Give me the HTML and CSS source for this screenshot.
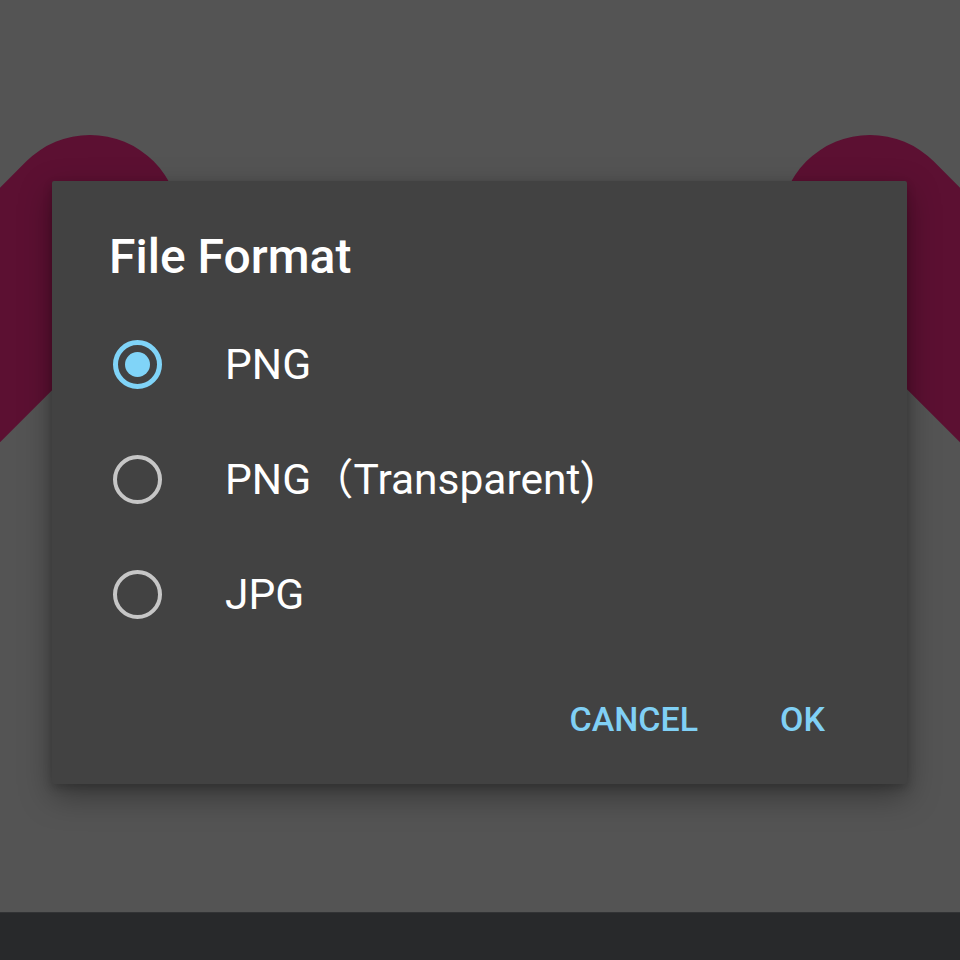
FILE: index.html
```html
<!DOCTYPE html>
<html lang="en">
<head>
<meta charset="utf-8">
<title>File Format</title>
<link rel="stylesheet" href="styles.css">
</head>
<body>
<div class="stage">
  <svg class="backdrop" width="960" height="912" viewBox="0 0 960 912" aria-hidden="true">
    <line x1="90" y1="225" x2="-300" y2="615" class="arm"/>
    <line x1="870" y1="225" x2="1260" y2="615" class="arm"/>
  </svg>
  <div class="dialog">
    <h1 class="title">File Format</h1>
    <ul class="options">
      <li class="option">
        <span class="radio checked"><span class="dot"></span></span>
        <span class="label">PNG</span>
      </li>
      <li class="option">
        <span class="radio"></span>
        <span class="label">PNG（Transparent)</span>
      </li>
      <li class="option">
        <span class="radio"></span>
        <span class="label">JPG</span>
      </li>
    </ul>
    <div class="actions">
      <span class="btn">CANCEL</span>
      <span class="btn">OK</span>
    </div>
  </div>
</div>
<div class="navbar"></div>
</body>
</html>
```
FILE: styles.css
```css
html, body {
  margin: 0;
  padding: 0;
}
body {
  width: 960px;
  height: 960px;
  background: #545454;
  font-family: Roboto, "Noto Sans", "Noto Sans CJK SC", sans-serif;
  overflow: hidden;
}
.stage {
  position: relative;
  height: 912px;
  padding: 181px 0 0 52px;
  box-sizing: border-box;
}
.backdrop {
  position: absolute;
  left: 0;
  top: 0;
}
.arm {
  stroke: #5c1032;
  stroke-width: 180;
  stroke-linecap: round;
}
.dialog {
  position: relative;
  width: 855px;
  height: 603px;
  box-sizing: border-box;
  background: #424242;
  border-radius: 2px;
  box-shadow: 0 12px 32px rgba(0, 0, 0, 0.35), 0 4px 10px rgba(0, 0, 0, 0.2);
  padding-top: 48px;
  display: flex;
  flex-direction: column;
}
.title {
  margin: 0 0 22px 0;
  padding-left: 57px;
  font-size: 48px;
  line-height: 56px;
  font-weight: 500;
  color: #ffffff;
}
.options {
  list-style: none;
  margin: 0;
  padding: 0;
}
.option {
  display: flex;
  align-items: center;
  height: 115px;
  padding-left: 61px;
}
.radio {
  width: 49px;
  height: 49px;
  box-sizing: border-box;
  border: 4px solid #c6c6c6;
  border-radius: 50%;
  display: flex;
  align-items: center;
  justify-content: center;
  flex: none;
}
.radio.checked {
  border: 5px solid #80d4f8;
}
.dot {
  width: 25px;
  height: 25px;
  border-radius: 50%;
  background: #80d4f8;
}
.label {
  margin-left: 63px;
  font-size: 42.5px;
  line-height: 115px;
  color: #ffffff;
}
.actions {
  display: flex;
  justify-content: flex-end;
  gap: 82px;
  margin-top: 39px;
  padding-right: 82px;
}
.btn {
  font-size: 34px;
  line-height: 56px;
  font-weight: 500;
  color: #80d0f5;
}
.navbar {
  height: 48px;
  background: #28292b;
  border-top: 1px solid #323335;
  box-sizing: border-box;
}
```
